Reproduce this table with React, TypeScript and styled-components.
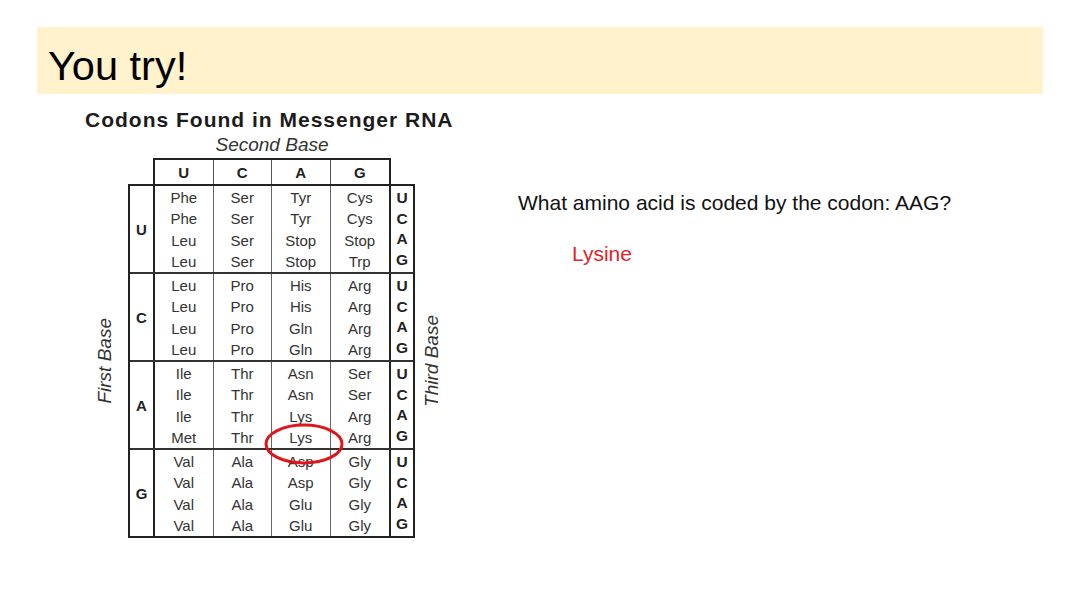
import React from 'react';
import styled, { createGlobalStyle } from 'styled-components';

const GlobalStyle = createGlobalStyle`
  html, body {
    margin: 0;
    padding: 0;
    background: #ffffff;
  }
  body {
    font-family: 'Liberation Sans', Arial, sans-serif;
    color: #000;
  }
`;

const Page = styled.div`
  width: 1080px;
  height: 607px;
  box-sizing: border-box;
  padding: 27px 37px 0;
  overflow: hidden;
`;

const Banner = styled.div`
  height: 67px;
  background: #fff2cc;
  padding: 15px 0 0 11px;
  box-sizing: border-box;
`;

const Heading = styled.h1`
  margin: 0;
  font-size: 41.5px;
  font-weight: normal;
  line-height: normal;
  color: #000;
`;

const Content = styled.div`
  display: flex;
  align-items: flex-start;
  padding-left: 48px;
  margin-top: 14px;
`;

const Figure = styled.div`
  width: 372px;
  flex-shrink: 0;
  color: #222;
`;

const FigureTitle = styled.div`
  font-size: 21px;
  font-weight: bold;
  letter-spacing: 1px;
  line-height: 24px;
  white-space: nowrap;
  color: #1c1c1c;
`;

const ChartRow = styled.div`
  display: flex;
  align-items: flex-end;
`;

const SideLabel = styled.div<{ $side: 'left' | 'right' }>`
  width: ${(p) => (p.$side === 'left' ? 43 : 42)}px;
  height: 354px;
  box-sizing: border-box;
  display: flex;
  align-items: center;
  justify-content: center;
  padding-right: ${(p) => (p.$side === 'left' ? 3 : 8)}px;

  span {
    writing-mode: vertical-rl;
    transform: rotate(180deg);
    font-style: italic;
    font-size: 19px;
    color: #333;
    white-space: nowrap;
  }
`;

const Chart = styled.div`
  display: flex;
  flex-direction: column;
`;

const SecondBase = styled.div`
  margin: 2px 0 2px 25px;
  width: 238px;
  text-align: center;
  font-style: italic;
  font-size: 19px;
  line-height: 22px;
  color: #333;
`;

const HeaderRow = styled.div`
  display: flex;
  margin-left: 25px;
  width: 238px;
  height: 26px;
  box-sizing: border-box;
  border: 2px solid #222;
  border-bottom: none;
`;

const HeaderCell = styled.div`
  width: 58.5px;
  box-sizing: border-box;
  display: flex;
  align-items: center;
  justify-content: center;
  font-weight: bold;
  font-size: 15px;
  color: #222;
  border-right: 1px solid #555;

  &:last-child {
    border-right: none;
  }
`;

const Body = styled.div`
  position: relative;
  width: 287px;
  box-sizing: border-box;
  border: 2px solid #222;
`;

const Block = styled.div<{ $first: boolean }>`
  display: flex;
  box-sizing: border-box;
  height: ${(p) => (p.$first ? 86 : 88)}px;
  border-top: ${(p) => (p.$first ? 'none' : '2px solid #333')};
`;

const BaseCell = styled.div`
  width: 25px;
  box-sizing: border-box;
  border-right: 2px solid #222;
  display: flex;
  align-items: center;
  justify-content: center;
  font-weight: bold;
  font-size: 15px;
  color: #222;
`;

const AminoCell = styled.div<{ $last: boolean }>`
  width: 58.5px;
  box-sizing: border-box;
  border-right: ${(p) => (p.$last ? 'none' : '1px solid #666')};
  display: flex;
  flex-direction: column;
  align-items: center;
  padding-top: 1px;
  font-size: 15px;
  line-height: 21.3px;
  color: #333;
`;

const ThirdCell = styled.div`
  width: 24px;
  box-sizing: border-box;
  border-left: 2px solid #222;
  display: flex;
  flex-direction: column;
  align-items: center;
  padding-top: 2px;
  font-weight: bold;
  font-size: 15.5px;
  line-height: 20.5px;
  color: #222;
`;

const Ring = styled.svg`
  position: absolute;
  left: 134px;
  top: 236px;
  overflow: visible;
`;

const Question = styled.div`
  margin: 83px 0 0 61px;
`;

const QuestionText = styled.div`
  font-size: 21px;
  line-height: 24px;
  color: #111;
  white-space: nowrap;
`;

const Answer = styled.div`
  margin: 27px 0 0 54px;
  font-size: 21px;
  line-height: 24px;
  color: #e3222a;
`;

const bases = ['U', 'C', 'A', 'G'];

const table: string[][][] = [
  [
    ['Phe', 'Phe', 'Leu', 'Leu'],
    ['Ser', 'Ser', 'Ser', 'Ser'],
    ['Tyr', 'Tyr', 'Stop', 'Stop'],
    ['Cys', 'Cys', 'Stop', 'Trp'],
  ],
  [
    ['Leu', 'Leu', 'Leu', 'Leu'],
    ['Pro', 'Pro', 'Pro', 'Pro'],
    ['His', 'His', 'Gln', 'Gln'],
    ['Arg', 'Arg', 'Arg', 'Arg'],
  ],
  [
    ['Ile', 'Ile', 'Ile', 'Met'],
    ['Thr', 'Thr', 'Thr', 'Thr'],
    ['Asn', 'Asn', 'Lys', 'Lys'],
    ['Ser', 'Ser', 'Arg', 'Arg'],
  ],
  [
    ['Val', 'Val', 'Val', 'Val'],
    ['Ala', 'Ala', 'Ala', 'Ala'],
    ['Asp', 'Asp', 'Glu', 'Glu'],
    ['Gly', 'Gly', 'Gly', 'Gly'],
  ],
];

export default function App() {
  return (
    <>
      <GlobalStyle />
      <Page>
        <Banner>
          <Heading>You try!</Heading>
        </Banner>

        <Content>
          <Figure>
            <FigureTitle>Codons Found in Messenger RNA</FigureTitle>
            <ChartRow>
              <SideLabel $side="left">
                <span>First Base</span>
              </SideLabel>
              <Chart>
                <SecondBase>Second Base</SecondBase>
                <HeaderRow>
                  {bases.map((b) => (
                    <HeaderCell key={b}>{b}</HeaderCell>
                  ))}
                </HeaderRow>
                <Body>
                  {table.map((block, i) => (
                    <Block key={bases[i]} $first={i === 0}>
                      <BaseCell>{bases[i]}</BaseCell>
                      {block.map((col, j) => (
                        <AminoCell key={j} $last={j === 3}>
                          {col.map((aa, k) => (
                            <span key={k}>{aa}</span>
                          ))}
                        </AminoCell>
                      ))}
                      <ThirdCell>
                        {bases.map((b) => (
                          <span key={b}>{b}</span>
                        ))}
                      </ThirdCell>
                    </Block>
                  ))}
                  <Ring width="80" height="42" viewBox="0 0 80 42">
                    <ellipse cx="40" cy="22" rx="38" ry="19" fill="none" stroke="#e0141b" strokeWidth="3" />
                  </Ring>
                </Body>
              </Chart>
              <SideLabel $side="right">
                <span>Third Base</span>
              </SideLabel>
            </ChartRow>
          </Figure>

          <Question>
            <QuestionText>What amino acid is coded by the codon: AAG?</QuestionText>
            <Answer>Lysine</Answer>
          </Question>
        </Content>
      </Page>
    </>
  );
}
